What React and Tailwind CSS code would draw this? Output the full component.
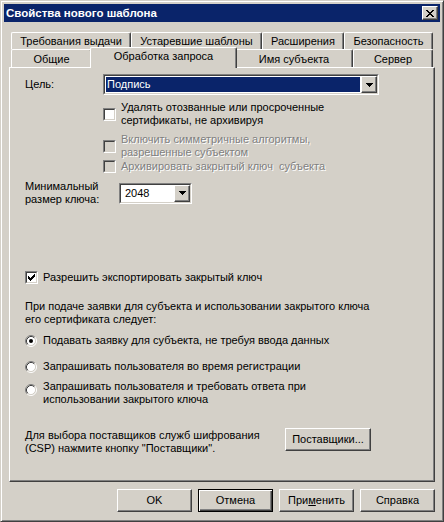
const raised =
  "border border-t-white border-l-white border-r-[#404040] border-b-[#404040] shadow-[inset_-1px_-1px_0_#808080]";

function Pixels({ w, h, rows }) {
  // draw a small bitmap glyph, "#" = black pixel
  const rects = [];
  rows.forEach((row, y) => {
    row.split("").forEach((c, x) => {
      if (c === "#") rects.push(<rect key={x + "-" + y} x={x} y={y} width="1" height="1" />);
    });
  });
  return (
    <svg width={w} height={h} viewBox={`0 0 ${w} ${h}`} shapeRendering="crispEdges" fill="#000">
      {rects}
    </svg>
  );
}

const closeGlyph = ["##....##", ".##..##.", "..####..", "...##...", "..####..", ".##..##.", "##....##"];
const checkGlyph = ["......#", ".....##", "#...###", "##.###.", "#####..", ".###...", "..#...."];
const arrowGlyph = ["#######", ".#####.", "..###..", "...#..."];

function CloseButton() {
  return (
    <div className={`w-[16px] h-[14px] bg-[#d4d0c8] flex items-center justify-center ${raised}`}>
      <Pixels w={8} h={7} rows={closeGlyph} />
    </div>
  );
}

function Checkbox({ checked, disabled }) {
  return (
    <div className="w-[13px] h-[13px] shrink-0 border border-t-[#808080] border-l-[#808080] border-r-white border-b-white">
      <div
        className={`w-full h-full border border-t-[#404040] border-l-[#404040] border-r-[#d4d0c8] border-b-[#d4d0c8] flex items-center justify-center ${
          disabled ? "bg-[#d4d0c8]" : "bg-white"
        }`}
      >
        {checked && <Pixels w={7} h={7} rows={checkGlyph} />}
      </div>
    </div>
  );
}

function Radio({ checked, className = "" }) {
  return (
    <svg width="12" height="12" viewBox="0 0 12 12" className={`shrink-0 ${className}`} fill="none">
      <circle cx="6" cy="6" r="4.5" fill="#fff" />
      <path d="M2.11 9.89 A5.5 5.5 0 0 1 9.89 2.11" stroke="#808080" />
      <path d="M9.89 2.11 A5.5 5.5 0 0 1 2.11 9.89" stroke="#fff" />
      <path d="M2.82 9.18 A4.5 4.5 0 0 1 9.18 2.82" stroke="#404040" />
      <path d="M9.18 2.82 A4.5 4.5 0 0 1 2.82 9.18" stroke="#d4d0c8" />
      {checked && <circle cx="6" cy="6" r="2" fill="#000" />}
    </svg>
  );
}

function Combo({ className, value, highlighted }) {
  return (
    <div className={`h-[21px] border border-t-[#808080] border-l-[#808080] border-r-white border-b-white ${className}`}>
      <div className="h-full flex bg-white border border-t-[#404040] border-l-[#404040] border-r-[#d4d0c8] border-b-[#d4d0c8]">
        <div className="flex-1 p-[1px] flex">
          <div
            className={`flex-1 flex items-center pl-[1px] ${highlighted ? "bg-[#0a246a] text-white" : ""}`}
          >
            {value}
          </div>
        </div>
        <div className={`w-[16px] h-full bg-[#d4d0c8] flex items-center justify-center ${raised}`}>
          <Pixels w={7} h={4} rows={arrowGlyph} />
        </div>
      </div>
    </div>
  );
}

function Button({ children, isDefault, className = "" }) {
  const look = isDefault
    ? "border border-black shadow-[inset_1px_1px_0_#fff,inset_-1px_-1px_0_#404040,inset_-2px_-2px_0_#808080]"
    : raised;
  return (
    <div className={`h-[23px] bg-[#d4d0c8] flex items-center justify-center ${look} ${className}`}>
      {children}
    </div>
  );
}

const tabEdge =
  "border-t border-l border-white border-r border-r-[#404040] shadow-[inset_-1px_0_0_#808080] rounded-t-[2px] flex items-center justify-center bg-[#d4d0c8]";

const disabledText = "text-[#808080] [text-shadow:1px_1px_0_#fff]";

export default function App() {
  return (
    <div className="w-[444px] h-[522px] bg-[#d4d0c8] border border-t-[#d4d0c8] border-l-[#d4d0c8] border-r-[#404040] border-b-[#404040] shadow-[inset_1px_1px_0_#fff,inset_-1px_-1px_0_#808080] p-[3px] flex flex-col text-[11px] leading-[13px] text-black font-['Liberation_Sans',Arial,sans-serif] select-none">
      {/* title bar */}
      <div className="h-[18px] shrink-0 bg-[#0a246a] flex items-center justify-between px-[2px]">
        <span className="text-white font-bold text-[11.5px]">Свойства нового шаблона</span>
        <CloseButton />
      </div>

      <div className="mt-[10px] px-[5px] flex flex-col">
        {/* back row of tabs */}
        <div className="flex h-[17px] px-[2px]">
          <div className={`w-[120px] h-[17px] pt-[1px] ${tabEdge}`}>Требования выдачи</div>
          <div className={`w-[131px] h-[17px] pt-[1px] ${tabEdge}`}>Устаревшие шаблоны</div>
          <div className={`w-[82px] h-[17px] pt-[1px] ${tabEdge}`}>Расширения</div>
          <div className={`w-[89px] h-[17px] pt-[1px] ${tabEdge}`}>Безопасность</div>
        </div>
        {/* front row of tabs */}
        <div className="flex items-start h-[18px] px-[2px]">
          <div className={`w-[81px] h-[18px] pt-[1px] ${tabEdge}`}>Общие</div>
          <div className={`relative z-10 w-[147px] h-[21px] -mt-[2px] -mb-[1px] -mx-[2px] pb-[3px] ${tabEdge}`}>
            Обработка запроса
          </div>
          <div className={`w-[118px] h-[18px] pt-[1px] ${tabEdge}`}>Имя субъекта</div>
          <div className={`w-[80px] h-[18px] pt-[1px] ${tabEdge}`}>Сервер</div>
        </div>

        {/* tab page */}
        <div className="h-[415px] border border-t-white border-l-white border-r-[#404040] border-b-[#404040] shadow-[inset_-1px_-1px_0_#808080] pl-[15px] pt-[6px] flex flex-col">
          <div className="flex items-center h-[21px]">
            <span className="w-[78px]">Цель:</span>
            <Combo className="w-[276px]" value="Подпись" highlighted />
          </div>

          <div className="mt-[6px] ml-[78px] flex items-center gap-[5px]">
            <Checkbox />
            <span>
              Удалять отозванные или просроченные
              <br />
              сертификаты, не архивируя
            </span>
          </div>
          <div className="mt-[6px] ml-[78px] flex items-center gap-[5px]">
            <Checkbox disabled />
            <span className={disabledText}>
              Включить симметричные алгоритмы,
              <br />
              разрешенные субъектом
            </span>
          </div>
          <div className="mt-[1px] ml-[78px] flex items-center gap-[5px]">
            <Checkbox disabled />
            <span className={disabledText}>Архивировать закрытый ключ{"\u00a0 "}субъекта</span>
          </div>

          <div className="mt-[7px] flex items-center">
            <span className="w-[94px]">
              Минимальный
              <br />
              размер ключа:
            </span>
            <Combo className="w-[73px]" value={<span className="pl-[2px]">2048</span>} />
          </div>

          <div className="mt-[65px] flex items-center gap-[5px]">
            <Checkbox checked />
            <span>Разрешить экспортировать закрытый ключ</span>
          </div>

          <div className="mt-[16px]">
            При подаче заявки для субъекта и использовании закрытого ключа
            <br />
            его сертификата следует:
          </div>

          <div className="mt-[8px] flex items-center gap-[6px]">
            <Radio checked />
            <span>Подавать заявку для субъекта, не требуя ввода данных</span>
          </div>
          <div className="mt-[13px] flex items-center gap-[6px]">
            <Radio />
            <span>Запрашивать пользователя во время регистрации</span>
          </div>
          <div className="mt-[7px] flex items-start gap-[6px]">
            <Radio className="mt-[4px]" />
            <span>
              Запрашивать пользователя и требовать ответа при
              <br />
              использовании закрытого ключа
            </span>
          </div>

          <div className="mt-[22px] flex items-start">
            <span className="w-[260px] mt-[1px]">
              Для выбора поставщиков служб шифрования
              <br />
              (CSP) нажмите кнопку "Поставщики".
            </span>
            <Button className="w-[86px]">Поставщики...</Button>
          </div>
        </div>
      </div>

      {/* dialog buttons */}
      <div className="mt-[7px] flex justify-end gap-[6px] pr-[5px]">
        <Button className="w-[75px]">OK</Button>
        <Button className="w-[75px]" isDefault>
          Отмена
        </Button>
        <Button className="w-[75px]">
          При<span className="underline">м</span>енить
        </Button>
        <Button className="w-[75px]">Справка</Button>
      </div>
    </div>
  );
}
